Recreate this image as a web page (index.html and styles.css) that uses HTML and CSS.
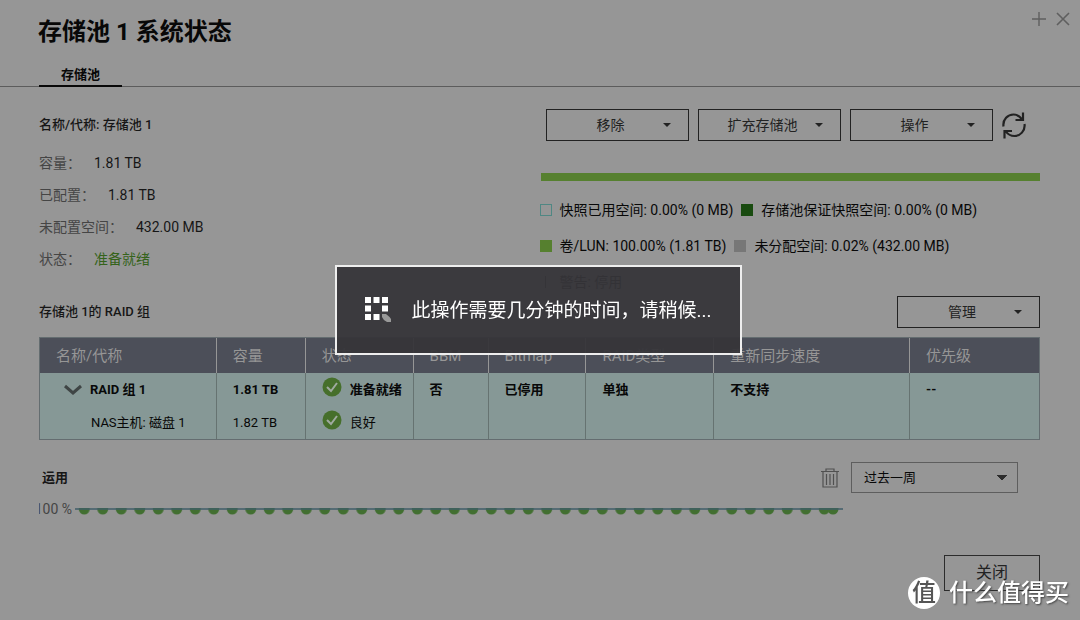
FILE: index.html
```html
<!DOCTYPE html>
<html lang="zh-CN">
<head>
<meta charset="utf-8">
<meta name="viewport" content="width=device-width, initial-scale=1">
<title>存储池 1 系统状态</title>
<link rel="stylesheet" href="styles.css">
</head>
<body>
<div class="page">
  <header class="header">
    <h1 class="title">存储池 1 系统状态</h1>
    <div class="window-actions">
      <button class="icon-button" aria-label="最大化"><svg width="14" height="14" viewBox="0 0 14 14"><path d="M7 0v14M0 7h14" stroke="#5f5f5f" stroke-width="1.4"/></svg></button>
      <button class="icon-button" aria-label="关闭窗口"><svg width="14" height="14" viewBox="0 0 14 14"><path d="M1 1l12 12M13 1L1 13" stroke="#5f5f5f" stroke-width="1.6"/></svg></button>
    </div>
  </header>
  <nav class="tabs"><a class="tab" href="#pool">存储池</a></nav>

  <main class="content" id="pool">
    <section class="summary">
      <div class="info">
        <h2 class="label-title">名称/代称: 存储池 1</h2>
        <dl class="facts">
          <div class="fact"><dt>容量：</dt><dd>1.81 TB</dd></div>
          <div class="fact"><dt>已配置：</dt><dd>1.81 TB</dd></div>
          <div class="fact"><dt>未配置空间：</dt><dd>432.00 MB</dd></div>
          <div class="fact"><dt>状态：</dt><dd class="ready">准备就绪</dd></div>
        </dl>
      </div>
      <div class="usage">
        <div class="toolbar">
          <button class="menu-button">移除</button>
          <button class="menu-button">扩充存储池</button>
          <button class="menu-button">操作</button>
          <button class="icon-button" aria-label="刷新">
            <svg width="24" height="28" viewBox="0 0 24 28" fill="none" stroke="#222" stroke-width="2.2"><path d="M1.500 15.500C.5 8 6 3.500 11.500 3.500c4 0 6.500 2 8.500 5M21 1.500v7.500h-7.500M22.500 13c1 7-4.500 12-10 12-4 0-7-2-9-5M2.500 27.500V20H10"/></svg>
          </button>
        </div>
        <div class="capacity-bar"></div>
        <ul class="legend">
          <li class="legend-row">
            <span class="legend-item"><i class="swatch snapshot"></i>快照已用空间: 0.00% (0 MB)</span>
            <span class="legend-item"><i class="swatch guaranteed"></i>存储池保证快照空间: 0.00% (0 MB)</span>
          </li>
          <li class="legend-row">
            <span class="legend-item"><i class="swatch volume"></i>卷/LUN: 100.00% (1.81 TB)</span>
            <span class="legend-item"><i class="swatch free"></i>未分配空间: 0.02% (432.00 MB)</span>
          </li>
          <li class="legend-row">
            <span class="legend-item"><i class="swatch warning"></i>警告: 停用</span>
          </li>
        </ul>
      </div>
    </section>

    <section class="group-head">
      <h2 class="label-title">存储池 1的 RAID 组</h2>
      <button class="menu-button">管理</button>
    </section>

    <table class="raid">
      <colgroup><col class="c-name"><col class="c-size"><col class="c-status"><col class="c-bbm"><col class="c-bitmap"><col class="c-type"><col class="c-speed"><col></colgroup>
      <thead>
        <tr><th>名称/代称</th><th>容量</th><th>状态</th><th>BBM</th><th>Bitmap</th><th>RAID类型</th><th>重新同步速度</th><th>优先级</th></tr>
      </thead>
      <tbody>
        <tr class="group-row">
          <td class="name-cell"><span class="with-icon"><svg width="18" height="12" viewBox="0 0 18 12"><path d="M1 2l8 7 8-7" fill="none" stroke="#3f4545" stroke-width="3"/></svg>RAID 组 1</span></td>
          <td>1.81 TB</td>
          <td><span class="with-icon"><svg class="check" width="20" height="20" viewBox="0 0 20 20"><circle cx="10" cy="10" r="9.500" fill="#466f2b"/><path d="M5 10l4 4 6-8" fill="none" stroke="#a0aaa0" stroke-width="2"/></svg>准备就绪</span></td>
          <td>否</td><td>已停用</td><td>单独</td><td>不支持</td><td>--</td>
        </tr>
        <tr>
          <td class="disk-cell">NAS主机: 磁盘 1</td>
          <td>1.82 TB</td>
          <td><span class="with-icon"><svg class="check" width="20" height="20" viewBox="0 0 20 20"><circle cx="10" cy="10" r="9.500" fill="#466f2b"/><path d="M5 10l4 4 6-8" fill="none" stroke="#a0aaa0" stroke-width="2"/></svg>良好</span></td>
          <td></td><td></td><td></td><td></td><td></td>
        </tr>
      </tbody>
    </table>

    <section class="history">
      <h2 class="label-title history-title">运用</h2>
      <button class="icon-button" aria-label="删除">
        <svg width="18" height="20" viewBox="0 0 18 20" fill="none" stroke="#505050" stroke-width="1.2"><path d="M0 3.500h18M5 3V1h8v2M2 4v15h14V4M5.500 6v11M9 6v11M12.500 6v11"/></svg>
      </button>
      <select class="period" aria-label="时间范围"><option>过去一周</option></select>
    </section>

    <div class="chart">
      <span class="axis">100 %</span>
      <svg class="plot" viewBox="0 0 768 8" role="img" aria-label="使用率 100%">
        <defs><pattern id="dots" width="18.500" height="8" patternUnits="userSpaceOnUse"><circle cx="9.250" cy="1" r="5.500" fill="#426f31"/></pattern></defs>
        <rect width="758" height="8" fill="url(#dots)"/>
        <circle cx="758" cy="1" r="5.500" fill="#426f31"/>
        <path d="M0 1h768" stroke="#3f5d68" stroke-width="1.500"/>
      </svg>
    </div>
  </main>

  <footer class="footer"><button class="close-button">关闭</button></footer>
</div>

<div class="overlay">
  <div class="dialog" role="status">
    <svg width="26" height="26" viewBox="0 0 26 26" fill="#fff"><path d="M0 0h6v6H0zM8.500 0h6v6h-6zM17 0h6v6h-6zM0 8.500h6v6H0zM17 8.500h6v6h-6zM0 17h6v6H0zM8.500 17h6v6h-6z"/><path d="M17 17h4q4 3 5 5v3h-4q-4-2-5-5z" fill="#999"/></svg>
    <span>此操作需要几分钟的时间，请稍候...</span>
  </div>
</div>

<div class="watermark"><span class="watermark-badge">值</span><span>什么值得买</span></div>
</body>
</html>
```

FILE: styles.css
```css
* { box-sizing: border-box; }

body {
  margin: 0;
  background: #969696;
  color: #080808;
  font: 14px/20px Roboto, "Noto Sans CJK SC", sans-serif;
}

h1, h2, dl, dd, ul { margin: 0; padding: 0; }

button, select { font: inherit; color: inherit; background: none; border-radius: 0; }

.page { min-height: 100vh; display: flex; flex-direction: column; }

.header { display: flex; justify-content: space-between; align-items: flex-start; padding: 12px 10px 0 38px; }
.title { font-size: 24px; line-height: 40px; font-weight: 700; }
.window-actions { display: flex; gap: 10px; }
.icon-button { border: 0; padding: 0; display: flex; flex: none; }

.tabs { display: flex; padding: 13px 39px 0; border-bottom: 1px solid #5c5c5c; }
.tab {
  width: 83px;
  margin-bottom: -1px;
  border-bottom: 2px solid #080808;
  color: inherit;
  font-size: 13px;
  font-weight: 700;
  text-align: center;
  text-decoration: none;
}

.content { padding: 22px 40px 0 39px; }

.summary { display: grid; grid-template-columns: 1fr 1fr; }
.label-title { font-size: 13px; line-height: 20px; font-weight: 500; color: #161616; }
.info { padding-top: 6px; }
.facts { padding-top: 12px; }
.fact { display: flex; gap: 13px; line-height: 32px; }
.fact dt { color: #454545; }
.fact dd { color: #161616; }
.fact .ready { color: #35631b; }

.toolbar { display: flex; gap: 9px; padding-left: 6px; align-items: center; }
.menu-button {
  width: 143px;
  height: 32px;
  display: grid;
  grid-template-columns: 1fr 18px;
  align-items: center;
  padding: 0 12px 0 17px;
  border: 1px solid #222;
  color: #222;
  text-align: center;
}
.menu-button::after {
  content: "";
  justify-self: center;
  border: 4px solid transparent;
  border-top-color: #222;
  border-bottom: 0;
}

.capacity-bar { height: 8px; margin: 32px 0 0 1px; background: #56802f; }
.legend { list-style: none; padding-top: 11px; }
.legend-row { display: flex; gap: 8px; height: 36px; align-items: center; white-space: nowrap; }
.legend-item { display: flex; align-items: center; gap: 8px; }
.swatch { width: 12px; height: 12px; }
.snapshot { border: 1px solid #4f8783; }
.guaranteed { background: #194b10; }
.volume { background: #56802f; }
.free { background: #777; }
.warning { width: 1px; margin: 0 6px 0 5px; background: #333; }

.group-head { display: flex; justify-content: space-between; align-items: center; margin-top: -4px; }

.raid {
  width: 100%;
  margin-top: 9px;
  table-layout: fixed;
  border-collapse: separate;
  border-spacing: 0;
  border: 1px solid #646d70;
  font-size: 13px;
  background: #869896;
}
.c-name { width: 17.7%; }
.c-size { width: 8.9%; }
.c-status { width: 10.8%; }
.c-bbm { width: 7.5%; }
.c-bitmap { width: 9.8%; }
.c-type { width: 12.8%; }
.c-speed { width: 19.6%; }
.raid th {
  height: 35px;
  padding: 1px 0 0 16px;
  background: #4c4f59;
  color: #969696;
  border-right: 1px solid #969696;
  font-size: 15px;
  font-weight: 400;
  text-align: left;
  white-space: nowrap;
}
.raid td { height: 33px; padding: 0 0 0 16px; border-right: 1px solid #667371; white-space: nowrap; }
.raid th:last-child, .raid td:last-child { border-right: 0; }
.group-row { font-weight: 700; }
.raid .name-cell { padding-left: 24px; }
.raid .disk-cell { padding-left: 51px; }
.with-icon { display: flex; align-items: center; gap: 8px; }
.check { margin-top: -5px; }

.history { display: flex; align-items: center; gap: 12px; padding: 22px 22px 0 3px; }
.history-title { flex: 1; font-weight: 700; }
.period {
  width: 167px;
  height: 31px;
  padding: 0 12px;
  border: 1px solid #5e5e5e;
  font-size: 13px;
  appearance: none;
  background:
    linear-gradient(to bottom left, #2c2c2c 50%, transparent 50%) right 15px center / 5px 6px no-repeat,
    linear-gradient(to bottom right, #2c2c2c 50%, transparent 50%) right 10px center / 5px 6px no-repeat;
}

.chart { display: flex; align-items: center; gap: 3px; padding-top: 6px; }
.axis { width: 33px; overflow: hidden; display: flex; justify-content: flex-end; white-space: nowrap; color: #454545; }
.plot { width: 768px; max-width: calc(100% - 36px); height: auto; margin-top: 6px; }

.footer { display: flex; justify-content: flex-end; padding: 36px 40px 28px; }
.close-button { width: 96px; height: 36px; border: 1px solid #2c2c2c; color: #222; font-size: 16px; }

.overlay { position: fixed; inset: 0; display: grid; place-items: center; padding-right: 3px; }
.dialog {
  display: flex;
  align-items: center;
  gap: 20px;
  padding: 30px 28px;
  border: 2px solid #eee;
  background: rgba(54, 53, 57, 0.95);
  color: #fff;
  font-size: 19px;
  line-height: 25px;
}

.watermark {
  position: fixed;
  right: 11px;
  bottom: 10px;
  display: flex;
  align-items: center;
  gap: 9px;
  color: #fff;
  font-size: 24px;
  line-height: 34px;
  font-weight: 500;
  text-shadow: 1px 1px 2px #444;
}
.watermark-badge {
  width: 32px;
  height: 32px;
  border-radius: 50%;
  background: #fff;
  color: #555;
  font-size: 24px;
  line-height: 32px;
  text-align: center;
  text-shadow: none;
}
```
